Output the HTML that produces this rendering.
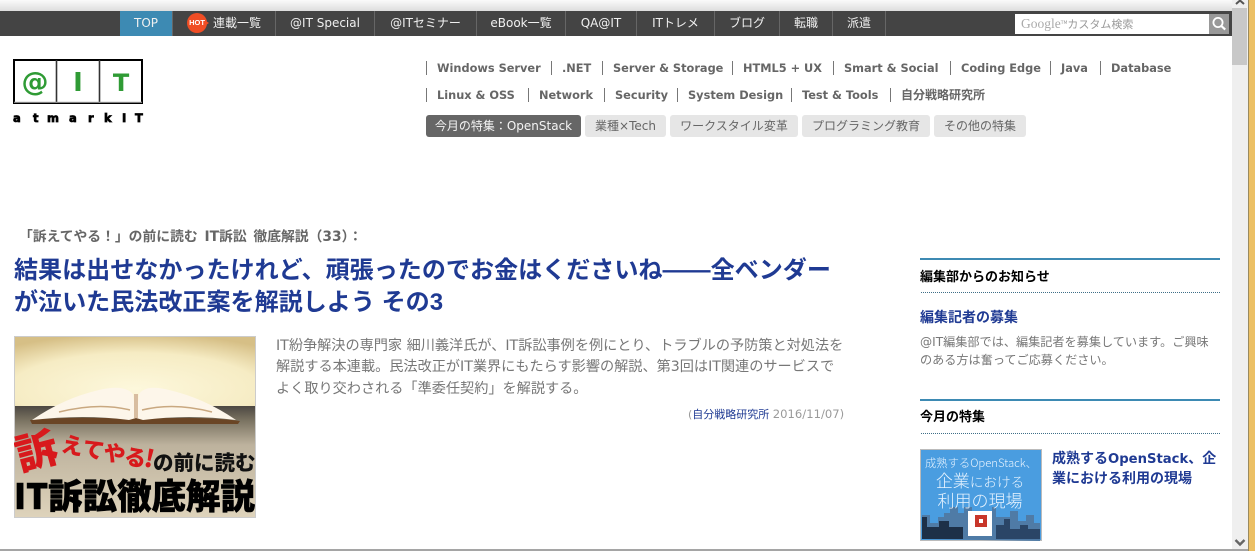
<!DOCTYPE html>
<html lang="ja"><head><meta charset="utf-8"><title>@IT</title>
<style>
html,body{margin:0;padding:0;background:#fff;overflow:hidden}
#p{position:relative;width:1255px;height:551px;overflow:hidden;background:#fff;font-family:"DejaVu Sans","Noto Sans CJK JP",sans-serif}
#p div{position:absolute;white-space:nowrap}
.n{top:11px;height:25px;line-height:25px;color:#f0f0f0;font-size:12px;text-align:center;border-right:1px solid #666;box-sizing:border-box}
.m{font-weight:700;font-size:11.35px;color:#666;line-height:16px;height:16px}
.s{width:1px;height:14px;background:#777}
.t{top:115px;height:22px;line-height:22px;font-size:12px;text-align:center;background:#e6e6e6;color:#666;border-radius:3px}
.h{font-weight:700;font-size:24.07px;color:#1f3a93;line-height:32px;font-family:"Liberation Sans","Noto Sans CJK JP",sans-serif}
.d{font-size:14.17px;color:#777;line-height:20px}
.r{font-size:12.15px;color:#777;line-height:18px}
.ti{font-size:14px;font-weight:700;color:#1f3a93;line-height:20px}
.ti span{font-size:13.2px}
</style></head><body><div id="p">

<div style="left:0;top:0;width:1232px;height:11px;background:linear-gradient(#fafafa,#ddd)"></div>
<div style="left:0;top:11px;width:1232px;height:25px;background:#444"></div>
<div class="n" style="left:120px;width:53px;background:#3d8ab3">TOP</div>
<div class="n" style="left:173px;width:103px;text-align:left;padding-left:40px">連載一覧</div>
<div style="left:187px;top:13px;width:20px;height:20px;border-radius:50%;background:#f04d24;color:#fff;font:700 7.5px/20px 'Liberation Sans',sans-serif;text-align:center">HOT</div>
<div style="left:206px;top:21px;width:0;height:0;border-left:3px solid #f04d24;border-top:2px solid transparent;border-bottom:2px solid transparent"></div>
<div class="n" style="left:276px;width:99px">@IT Special</div>
<div class="n" style="left:375px;width:102px">@ITセミナー</div>
<div class="n" style="left:477px;width:89px">eBook一覧</div>
<div class="n" style="left:566px;width:71px">QA@IT</div>
<div class="n" style="left:637px;width:78px">ITトレメ</div>
<div class="n" style="left:715px;width:65px">ブログ</div>
<div class="n" style="left:780px;width:53px">転職</div>
<div class="n" style="left:833px;width:53px">派遣</div>

<div style="left:1015px;top:14px;width:194px;height:20px;background:#fff"></div>
<div style="left:1021px;top:14px;height:19px;line-height:19px;font-size:11px;color:#999"><span style="font-family:'Liberation Serif',serif;font-size:13.5px;color:#aaa">Google</span><span style="font-size:4.5px;vertical-align:4px">TM</span>カスタム検索</div>
<div style="left:1209px;top:14px;width:20px;height:20px;background:#999"></div>
<svg style="position:absolute;left:1209px;top:13px" width="20" height="21" viewBox="0 0 20 21"><circle cx="9" cy="9.5" r="4.6" fill="none" stroke="#fff" stroke-width="1.8"/><path d="M12.4 13l3.8 3.6" stroke="#fff" stroke-width="2.2" fill="none"/></svg>

<div style="left:1232px;top:0;width:16px;height:549px;background:#efefef"></div>
<div style="left:1232px;top:8px;width:15px;height:57px;background:#c8c8c8"></div>
<svg style="position:absolute;left:1232px;top:0" width="16" height="8" viewBox="0 0 16 8"><path d="M4 4L8 0.5L12 4" stroke="#555" stroke-width="2" fill="none"/></svg>
<svg style="position:absolute;left:1232px;top:538px" width="16" height="9" viewBox="0 0 16 9"><path d="M3.5 2L8 6.5L12.5 2" stroke="#666" stroke-width="2.4" fill="none"/></svg>
<div style="left:1248px;top:0;width:1px;height:551px;background:#9a8a60"></div>
<div style="left:1249px;top:0;width:6px;height:551px;background:#ecc064"></div>
<div style="left:0;top:549px;width:1248px;height:2px;background:#a5a5a5"></div>

<svg style="position:absolute;left:13px;top:59px" width="131" height="66" viewBox="0 0 131 66">
<rect x="1" y="1" width="128" height="43" fill="#fff" stroke="#000" stroke-width="2"/>
<path d="M43.5 1v43M86.5 1v43" stroke="#333" stroke-width="1.6"/>
<path d="M1 43.2h128" stroke="#aaa" stroke-width="1"/>
<g font-family="DejaVu Sans" font-weight="700" fill="#2f9b35" text-anchor="middle">
<text x="22" y="32" font-size="27">@</text>
<text x="65" y="32" font-size="26">I</text>
<text x="108" y="32" font-size="24">T</text></g>
<g font-family="DejaVu Sans" font-weight="700" font-size="11.5" fill="#000" stroke="#000" stroke-width=".7">
<text x="0" y="63">a</text><text x="20" y="63">t</text><text x="34" y="63">m</text><text x="56" y="63">a</text><text x="75" y="63">r</text><text x="91" y="63">k</text><text x="109" y="63">I</text><text x="122" y="63">T</text></g>
</svg>

<div class="s" style="left:426px;top:61px"></div><div class="m" style="left:437px;top:60px">Windows Server</div>
<div class="s" style="left:551px;top:61px"></div><div class="m" style="left:562px;top:60px">.NET</div>
<div class="s" style="left:602px;top:61px"></div><div class="m" style="left:613px;top:60px">Server &amp; Storage</div>
<div class="s" style="left:732px;top:61px"></div><div class="m" style="left:743px;top:60px">HTML5 + UX</div>
<div class="s" style="left:833px;top:61px"></div><div class="m" style="left:844px;top:60px">Smart &amp; Social</div>
<div class="s" style="left:950px;top:61px"></div><div class="m" style="left:961px;top:60px">Coding Edge</div>
<div class="s" style="left:1050px;top:61px"></div><div class="m" style="left:1061px;top:60px">Java</div>
<div class="s" style="left:1100px;top:61px"></div><div class="m" style="left:1111px;top:60px">Database</div>

<div class="s" style="left:426px;top:88px"></div><div class="m" style="left:437px;top:87px">Linux &amp; OSS</div>
<div class="s" style="left:528px;top:88px"></div><div class="m" style="left:539px;top:87px">Network</div>
<div class="s" style="left:604px;top:88px"></div><div class="m" style="left:615px;top:87px">Security</div>
<div class="s" style="left:677px;top:88px"></div><div class="m" style="left:688px;top:87px">System Design</div>
<div class="s" style="left:791px;top:88px"></div><div class="m" style="left:802px;top:87px">Test &amp; Tools</div>
<div class="s" style="left:890px;top:88px"></div><div class="m" style="left:901px;top:87px;font-size:12px">自分戦略研究所</div>

<div class="t" style="left:426px;width:155px;background:#666;color:#f4f4f4">今月の特集：OpenStack</div>
<div class="t" style="left:585px;width:81px">業種×Tech</div>
<div class="t" style="left:670px;width:128px">ワークスタイル変革</div>
<div class="t" style="left:802px;width:128px">プログラミング教育</div>
<div class="t" style="left:934px;width:92px">その他の特集</div>

<div style="left:19px;top:228px;line-height:18px;font-size:13.8px;font-weight:700;color:#666;word-spacing:2px">「訴えてやる！」の前に読む IT訴訟 徹底解説（33）：</div>
<div class="h" style="left:14px;top:255px">結果は出せなかったけれど、頑張ったのでお金はくださいね――全ベンダー</div>
<div class="h" style="left:14px;top:287px">が泣いた民法改正案を解説しよう その3</div>

<svg style="position:absolute;left:14px;top:336px" width="242" height="182" viewBox="0 0 242 182">
<defs>
<radialGradient id="w" cx=".5" cy=".75" r=".8"><stop offset="0" stop-color="#fdf8dc"/><stop offset=".65" stop-color="#f6ecc4"/><stop offset="1" stop-color="#d6bf86"/></radialGradient>
<linearGradient id="f" x1="0" y1="0" x2="0" y2="1"><stop offset="0" stop-color="#4c4842"/><stop offset=".12" stop-color="#77705f"/><stop offset=".35" stop-color="#bdb29d"/><stop offset="1" stop-color="#ded3bb"/></linearGradient>
</defs>
<rect x=".5" y=".5" width="241" height="181" fill="#e8e0d0" stroke="#ccc"/>
<rect x="1" y="1" width="240" height="69" fill="url(#w)"/>
<rect x="1" y="70" width="240" height="111" fill="url(#f)"/>
<path d="M16 84Q60 80 115 83L122 80L128 83Q190 80 226 85L224 88H18Z" fill="#6a4525"/>
<path d="M18 84Q50 62 85 54Q110 48 119 58L122 82L115 84Q70 78 18 84Z" fill="#fdf6ea"/>
<path d="M222 84Q190 62 155 54Q132 48 125 58L122 82L129 84Q175 78 222 84Z" fill="#fdf6ea"/>
<path d="M45 76Q85 66 116 74M198 76Q160 66 128 74" stroke="#c9a880" stroke-width="1.5" fill="none"/>
<path d="M122 58V82" stroke="#d8bda0" stroke-width="4"/>
<g font-family="Noto Sans CJK JP,sans-serif" font-weight="900">
<text transform="translate(6,135) rotate(-15)" font-size="42" fill="#d8191c">訴</text>
<text transform="translate(46,115) rotate(12)" font-size="22" fill="#d8191c">え</text>
<text transform="translate(67,119) rotate(12)" font-size="22" fill="#d8191c">て</text>
<text transform="translate(88,123) rotate(12)" font-size="22" fill="#d8191c">や</text>
<text transform="translate(109,127) rotate(12)" font-size="22" fill="#d8191c">る</text>
<text transform="translate(129,130) rotate(12)" font-size="24" fill="#d8191c">!</text>
<text x="139" y="134" font-size="20.5" fill="#111">の前に読む</text>
<text x="0" y="173" font-size="35" fill="#000" stroke="#000" stroke-width=".6" textLength="241" lengthAdjust="spacingAndGlyphs">IT訴訟徹底解説</text>
</g>
</svg>

<div class="d" style="left:276px;top:336px">IT紛争解決の専門家 細川義洋氏が、IT訴訟事例を例にとり、トラブルの予防策と対処法を</div>
<div class="d" style="left:276px;top:357px">解説する本連載。民法改正がIT業界にもたらす影響の解説、第3回はIT関連のサービスで</div>
<div class="d" style="left:276px;top:379px">よく取り交わされる「準委任契約」を解説する。</div>
<div style="left:688px;top:405px;font-size:11px;line-height:18px;color:#9a9a9a">(<span style="color:#1f3a93">自分戦略研究所</span> <span style="font-size:11.6px">2016/11/07)</span></div>

<div style="left:920px;top:258px;width:300px;height:2px;background:#3d8ab3"></div>
<div style="left:920px;top:269px;font-size:13px;font-weight:700;color:#000;line-height:18px">編集部からのお知らせ</div>
<div style="left:921px;top:292px;width:299px;border-top:1px dotted #3f6f88"></div>
<div class="ti" style="left:920px;top:308px">編集記者の募集</div>
<div class="r" style="left:920px;top:333px">@IT編集部では、編集記者を募集しています。ご興味</div>
<div class="r" style="left:920px;top:351px">のある方は奮ってご応募ください。</div>

<div style="left:920px;top:399px;width:300px;height:2px;background:#3d8ab3"></div>
<div style="left:920px;top:409px;font-size:13px;font-weight:700;color:#000;line-height:18px">今月の特集</div>
<div style="left:921px;top:433px;width:299px;border-top:1px dotted #3f6f88"></div>

<svg style="position:absolute;left:920px;top:449px" width="122" height="92" viewBox="0 0 122 92">
<rect x=".5" y=".5" width="121" height="91" fill="#4a9de0" stroke="#bbb"/>
<path d="M2 90V66h8v8h8v-6h6v-4h6v-6h8v6h6v-6h8v12h14v-4h6v-8h4v10h14v-6h8v10h8v-6h8v8h6v18Z" fill="#4f7ba6"/>
<path d="M2 90V68h5v10h12v-6h10v6h14v12Z" fill="#1d3048"/>
<path d="M76 90V76h8v-6h6v10h10v-4h8v4h12v10Z" fill="#2a4566"/>
<rect x="48" y="62" width="24" height="25" fill="#fff"/>
<rect x="55" y="66" width="12" height="12" fill="#c8362a"/><rect x="59" y="70" width="4" height="4" fill="#fff"/>
<g fill="#e8f4ff" font-family="Noto Sans CJK JP,sans-serif" font-weight="300" text-anchor="middle">
<text x="61" y="18" font-size="11.3">成熟するOpenStack、</text>
<text x="60" y="38"><tspan font-size="17">企業</tspan><tspan font-size="13.6">における</tspan></text>
<text x="60" y="58" font-size="17">利用の現場</text></g>
</svg>
<div class="ti" style="left:1052px;top:449px">成熟する<span>OpenStack</span>、企</div>
<div class="ti" style="left:1052px;top:469px">業における利用の現場</div>

</div></body></html>
